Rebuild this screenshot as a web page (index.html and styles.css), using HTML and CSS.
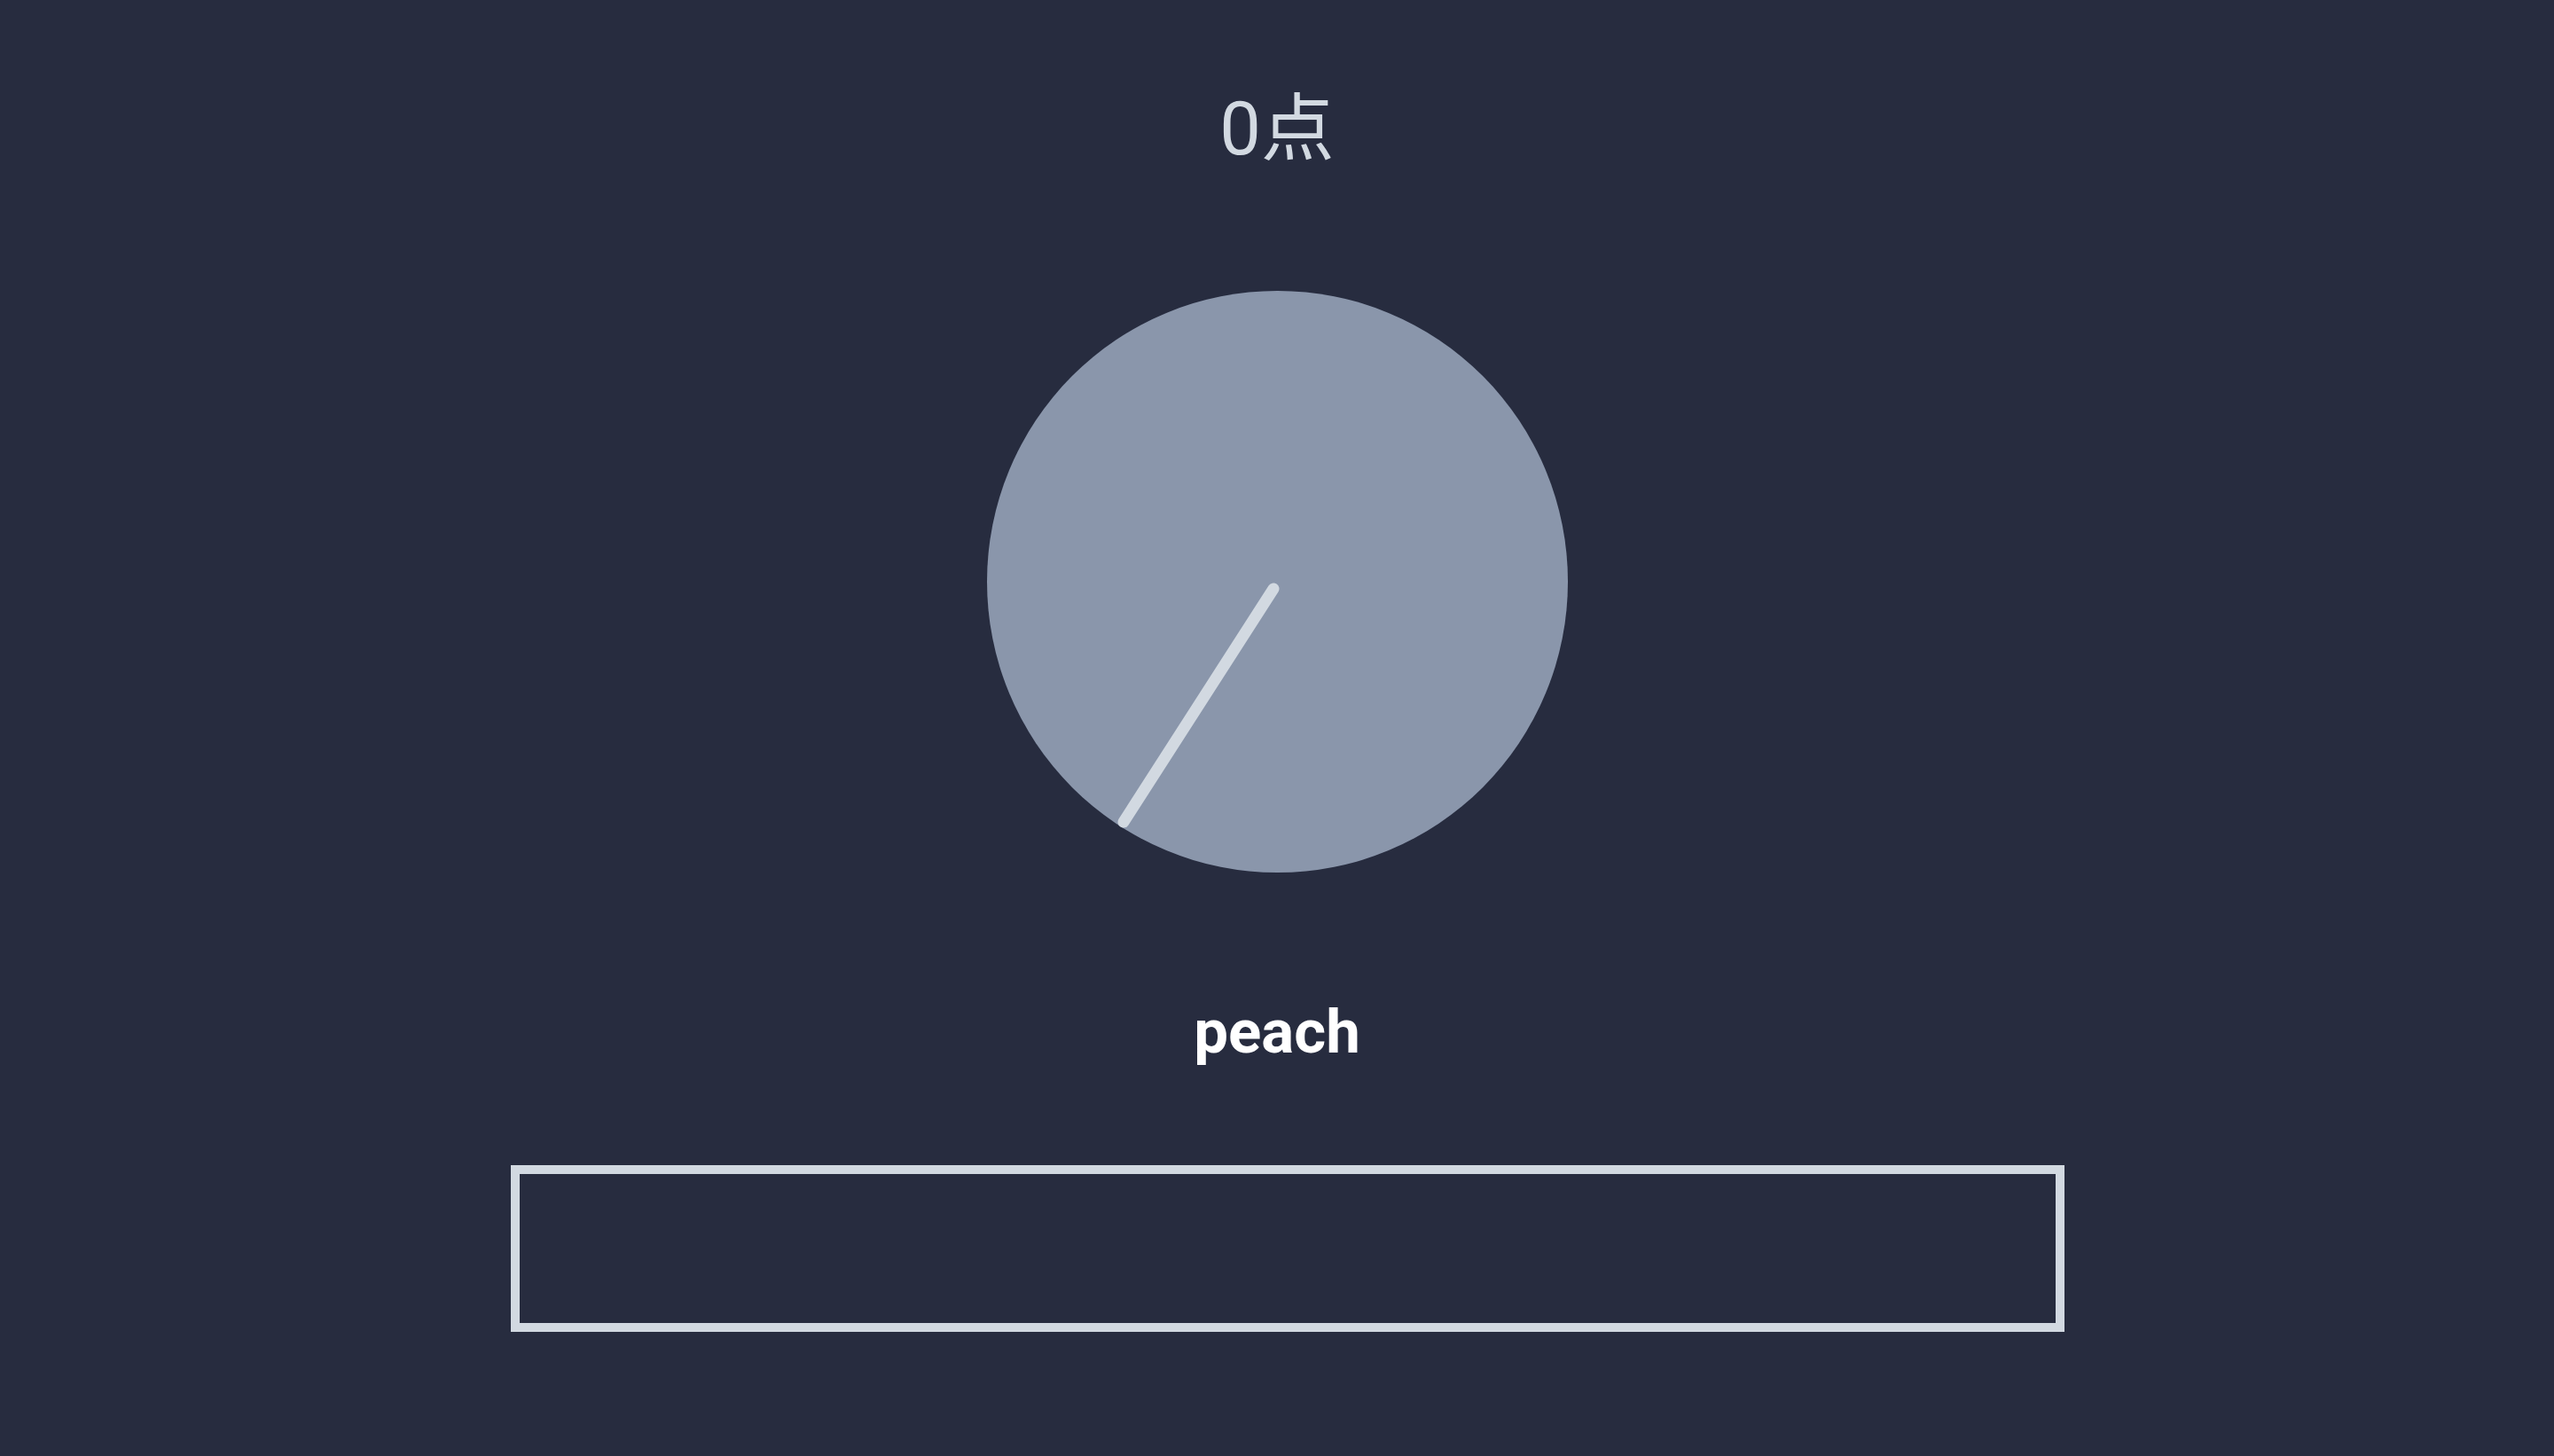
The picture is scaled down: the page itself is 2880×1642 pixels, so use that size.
FILE: index.html
```html
<!DOCTYPE html>
<html lang="ja">
<head>
<meta charset="utf-8">
<title>clock</title>
<link rel="stylesheet" href="styles.css">
</head>
<body>
<main class="app">
  <h1 class="time">0点</h1>
  <div class="dial">
    <svg class="dial-svg" width="655" height="656" viewBox="0 0 655 656">
      <ellipse cx="327.5" cy="328" rx="327.5" ry="328" fill="#8a96ab"/>
      <line x1="323" y1="336" x2="154" y2="599" stroke="#d2d9e1" stroke-width="13" stroke-linecap="round"/>
    </svg>
  </div>
  <div class="word">peach</div>
  <input class="answer" type="text" aria-label="answer">
</main>
</body>
</html>
```
FILE: styles.css
```css
html, body {
  margin: 0;
  padding: 0;
  background: #272c3f;
}
body {
  width: 2880px;
  height: 1642px;
  overflow: hidden;
}
.app {
  display: flex;
  flex-direction: column;
  align-items: center;
}
.time {
  margin: 96px 0 0;
  font-family: Roboto, "Noto Sans CJK JP", sans-serif;
  font-weight: 400;
  font-size: 83px;
  line-height: 100px;
  color: #d2d9e1;
}
.dial {
  margin-top: 132px;
  width: 655px;
  height: 656px;
}
.dial-svg {
  display: block;
}
.word {
  margin-top: 140px;
  font-family: Roboto, "Liberation Sans", sans-serif;
  font-weight: 700;
  font-size: 69px;
  line-height: 80px;
  color: #ffffff;
}
.answer {
  margin-top: 110px;
  margin-left: 24px;
  box-sizing: border-box;
  width: 1752px;
  height: 188px;
  border: 10px solid #d2d9e1;
  background: #272c3f;
  outline: none;
  padding: 0;
  border-radius: 0;
}
```
